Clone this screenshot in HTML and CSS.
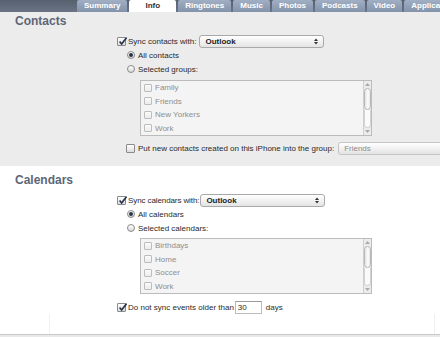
FILE: index.html
```html
<!DOCTYPE html>
<html>
<head>
<meta charset="utf-8">
<link rel="stylesheet" href="styles.css">
</head>
<body>
<div class="tabs">
  <div class="tab">Summary</div>
  <div class="tab active">Info</div>
  <div class="tab">Ringtones</div>
  <div class="tab">Music</div>
  <div class="tab">Photos</div>
  <div class="tab">Podcasts</div>
  <div class="tab">Video</div>
  <div class="tab">Applica</div>
</div>

<section class="sec contacts">
  <h2 class="head">Contacts</h2>
  <div class="form">
    <div class="row">
      <span class="cb checked"><svg viewBox="0 0 9 9"><path d="M1.6 4.6 L3.6 7 L8.6 0.6" fill="none" stroke="#26324a" stroke-width="1.6"/></svg></span>
      <span class="label">Sync contacts with:</span>
      <div class="select">Outlook<svg class="arr" viewBox="0 0 4 7"><path d="M0 3 L2 0.5 L4 3 Z M0 4 L2 6.5 L4 4 Z" fill="#333"/></svg></div>
    </div>
    <div class="row sub"><span class="radio on"></span><span class="label">All contacts</span></div>
    <div class="row sub"><span class="radio"></span><span class="label">Selected groups:</span></div>
    <div class="list">
      <div class="items">
        <div class="item"><span class="cb dis"></span>Family</div>
        <div class="item"><span class="cb dis"></span>Friends</div>
        <div class="item"><span class="cb dis"></span>New Yorkers</div>
        <div class="item"><span class="cb dis"></span>Work</div>
      </div>
      <div class="scroll">
        <svg class="sarr" viewBox="0 0 5 3"><path d="M0 3 L2.5 0 L5 3 Z" fill="#aaa"/></svg>
        <div class="thumb"></div>
        <div class="track"></div>
        <svg class="sarr" viewBox="0 0 5 3"><path d="M0 0 L2.5 3 L5 0 Z" fill="#aaa"/></svg>
      </div>
    </div>
    <div class="row sub put">
      <span class="cb"></span>
      <span class="label">Put new contacts created on this iPhone into the group:</span>
      <div class="select disabled">Friends<svg class="arr" viewBox="0 0 4 7"><path d="M0 3 L2 0.5 L4 3 Z M0 4 L2 6.5 L4 4 Z" fill="#777"/></svg></div>
    </div>
  </div>
</section>

<section class="sec calendars">
  <h2 class="head">Calendars</h2>
  <div class="form">
    <div class="row">
      <span class="cb checked"><svg viewBox="0 0 9 9"><path d="M1.6 4.6 L3.6 7 L8.6 0.6" fill="none" stroke="#26324a" stroke-width="1.6"/></svg></span>
      <span class="label tight">Sync calendars with:</span>
      <div class="select">Outlook<svg class="arr" viewBox="0 0 4 7"><path d="M0 3 L2 0.5 L4 3 Z M0 4 L2 6.5 L4 4 Z" fill="#333"/></svg></div>
    </div>
    <div class="row sub"><span class="radio on"></span><span class="label">All calendars</span></div>
    <div class="row sub"><span class="radio"></span><span class="label">Selected calendars:</span></div>
    <div class="list">
      <div class="items">
        <div class="item"><span class="cb dis"></span>Birthdays</div>
        <div class="item"><span class="cb dis"></span>Home</div>
        <div class="item"><span class="cb dis"></span>Soccer</div>
        <div class="item"><span class="cb dis"></span>Work</div>
      </div>
      <div class="scroll">
        <svg class="sarr" viewBox="0 0 5 3"><path d="M0 3 L2.5 0 L5 3 Z" fill="#aaa"/></svg>
        <div class="thumb"></div>
        <div class="track"></div>
        <svg class="sarr" viewBox="0 0 5 3"><path d="M0 0 L2.5 3 L5 0 Z" fill="#aaa"/></svg>
      </div>
    </div>
    <div class="row days">
      <span class="cb checked"><svg viewBox="0 0 9 9"><path d="M1.6 4.6 L3.6 7 L8.6 0.6" fill="none" stroke="#26324a" stroke-width="1.6"/></svg></span>
      <span class="label">Do not sync events older than</span>
      <div class="input">30</div>
      <span class="label unit">days</span>
    </div>
  </div>
  <div class="foot"></div>
</section>
<div class="bottom"></div>
</body>
</html>
```

FILE: styles.css
```css
html, body {
  margin: 0;
  padding: 0;
}
body {
  width: 440px;
  height: 337px;
  overflow: hidden;
  background: #e9e9e9;
  font-family: "Liberation Sans", Arial, sans-serif;
  font-size: 8px;
  color: #2a2a2a;
}
.tabs {
  display: flex;
  gap: 2px;
  height: 12px;
  padding-left: 77px;
  background: linear-gradient(#56606f, #6a7485);
  overflow: hidden;
  white-space: nowrap;
}
.tab {
  flex: none;
  height: 12px;
  line-height: 12px;
  padding: 0 7px;
  font-weight: bold;
  font-size: 8px;
  color: #fff;
  background: linear-gradient(#a1afc4, #8293ab);
  border-radius: 2px 2px 0 0;
}
.tab.active {
  background: #fff;
  color: #333;
  padding: 0 16px;
}
.sec {
  display: flex;
  flex-direction: column;
}
.contacts {
  background: #ececec;
  padding: 2px 0 11px;
}
.calendars {
  background: #fff;
  padding-top: 7px;
}
.head {
  margin: 0;
  padding-left: 15px;
  font-size: 12px;
  line-height: 14px;
  font-weight: bold;
  color: #5d6677;
}
.form {
  display: flex;
  flex-direction: column;
  margin-top: 6px;
  padding-left: 117px;
}
.row {
  display: flex;
  align-items: center;
  height: 14px;
  white-space: nowrap;
}
.row.sub {
  padding-left: 10px;
}
.cb {
  flex: none;
  box-sizing: border-box;
  width: 9px;
  height: 9px;
  border: 1px solid #8a8a8a;
  border-radius: 1px;
  background: linear-gradient(#ffffff, #dcdcdc);
  position: relative;
}
.cb svg {
  position: absolute;
  left: 0;
  top: -1px;
  width: 9px;
  height: 9px;
}
.row.sub .cb {
  margin-left: -1px;
}
.label {
  margin-left: 2px;
}
.label.tight {
  letter-spacing: -0.1px;
}
.row.sub .label {
  margin-left: 3px;
}
.radio {
  flex: none;
  box-sizing: border-box;
  width: 8px;
  height: 8px;
  border: 1px solid #8a8a8a;
  border-radius: 50%;
  background: linear-gradient(#ffffff, #d8d8d8);
  display: flex;
  align-items: center;
  justify-content: center;
}
.radio.on::after {
  content: "";
  width: 4px;
  height: 4px;
  border-radius: 50%;
  background: #2c3346;
}
.select {
  flex: none;
  box-sizing: border-box;
  width: 125px;
  height: 13px;
  margin-left: 3px;
  padding: 0 5px;
  border: 1px solid #a9a9a9;
  border-radius: 3px;
  background: linear-gradient(#ffffff, #e4e4e4);
  font-weight: bold;
  line-height: 11px;
  color: #222;
  display: flex;
  align-items: center;
  justify-content: space-between;
}
.label.tight + .select {
  margin-left: 1px;
}
.select.disabled {
  width: 112px;
  margin-left: 4px;
  font-weight: normal;
  color: #8c8c8c;
  border-color: #c4c4c4;
}
.arr {
  width: 4px;
  height: 7px;
}
.list {
  display: flex;
  box-sizing: border-box;
  width: 232px;
  height: 56px;
  margin: 4px 0 0 23px;
  border: 1px solid #bcbcbc;
  background: #f4f4f4;
}
.items {
  flex: 1;
  display: flex;
  flex-direction: column;
  padding-left: 3px;
}
.item {
  display: flex;
  align-items: center;
  gap: 3px;
  height: 13.5px;
  color: #8e8e8e;
}
.cb.dis {
  width: 8px;
  height: 8px;
  border-color: #bdbdbd;
  background: linear-gradient(#fafafa, #ececec);
}
.scroll {
  flex: none;
  width: 8px;
  border-left: 1px solid #cfcfcf;
  background: #ececec;
  display: flex;
  flex-direction: column;
  align-items: center;
  padding: 2px 0;
  box-sizing: border-box;
}
.sarr {
  width: 5px;
  height: 3px;
  flex: none;
}
.thumb {
  margin-top: 2px;
  width: 7px;
  height: 22px;
  box-sizing: border-box;
  border: 1px solid #b8b8b8;
  border-radius: 4px;
  background: linear-gradient(90deg, #e2e2e2, #fdfdfd 60%, #e6e6e6);
}
.track {
  flex: 1;
  width: 7px;
  margin-bottom: 2px;
  box-sizing: border-box;
  border: 1px solid #d2d2d2;
  border-top: none;
  border-radius: 0 0 4px 4px;
  background: #fafafa;
}
.put {
  margin-top: 5px;
}
.list + .days {
  margin-top: 6px;
}
.calendars .list {
  margin-top: 3px;
}
.input {
  box-sizing: border-box;
  width: 27px;
  height: 13px;
  margin-left: 1px;
  padding-left: 2px;
  border: 1px solid #bdbdbd;
  border-top-color: #9a9a9a;
  background: #fff;
  line-height: 11px;
}
.label.unit {
  margin-left: 4px;
}
.foot {
  height: 20px;
  margin: 0 5px 0 49px;
  border-left: 1px solid #f0f0f0;
  border-right: 1px solid #f0f0f0;
}
.bottom {
  height: 3px;
  border-top: 1px solid #c9c9c9;
  background: #e9e9e9;
}
```
